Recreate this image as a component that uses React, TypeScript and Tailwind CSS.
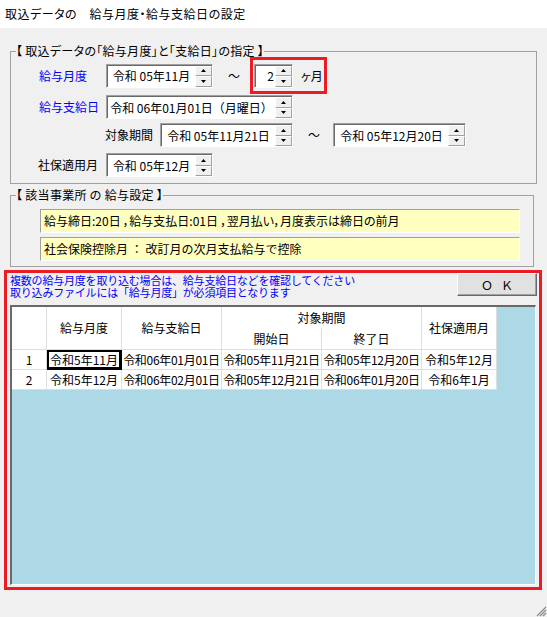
import React from "react";

const Arrow = ({ up }: { up?: boolean }) => (
  <svg width="5" height="3" viewBox="0 0 5 3" className="block">
    <path d={up ? "M0 3 L2.5 0 L5 3Z" : "M0 0 L5 0 L2.5 3Z"} fill="#000" />
  </svg>
);

function Spinner() {
  return (
    <div className="flex h-full w-[17px] shrink-0 flex-col">
      <div className="flex flex-1 items-center justify-center border border-b-[#a0a0a0] border-l-white border-r-[#a0a0a0] border-t-white bg-[#f0f0f0]">
        <Arrow up />
      </div>
      <div className="flex flex-1 items-center justify-center border border-b-[#a0a0a0] border-l-white border-r-[#a0a0a0] border-t-white bg-[#f0f0f0]">
        <Arrow />
      </div>
    </div>
  );
}

function Field({ w, text, right }: { w: string; text: string; right?: boolean }) {
  return (
    <div
      className={`flex h-[24px] shrink-0 border border-b-white border-l-[#a0a0a0] border-r-white border-t-[#a0a0a0] bg-white pl-[1px] pt-[1px] shadow-[inset_1px_1px_0_#696969] ${w}`}
    >
      <div
        className={`flex flex-1 items-center whitespace-nowrap leading-[14px] ${
          right ? "justify-end pr-[1px]" : "justify-center"
        }`}
      >
        {text}
      </div>
      <Spinner />
    </div>
  );
}

const cell = "flex items-center justify-center whitespace-nowrap border-b border-r border-[#dedede] leading-[14px]";

export default function App() {
  return (
    <div className="flex h-[617px] w-[547px] flex-col overflow-hidden bg-[#f0f0f0] font-['Noto_Sans_CJK_JP','Noto_Sans',sans-serif] text-[12px] text-black">
      <div className="h-[28px] shrink-0 bg-white pl-[5px] text-[12px] leading-[28px] tracking-[0.5px] [font-feature-settings:'palt']">
        取込データの　給与月度・給与支給日の設定
      </div>

      <fieldset className="ml-[10px] mt-[17px] w-[527px] shrink-0 border border-[#a0a0a0] pb-[6px]">
        <legend className="ml-[5px] whitespace-nowrap text-[12px] leading-[12px] tracking-[0.3px] [font-feature-settings:'palt']">
          【 取込データの「給与月度」と「支給日」の指定 】
        </legend>
        <div className="flex h-[37px] items-center pl-[28px]">
          <div className="w-[67px] leading-[14px] text-[#0000ff]">給与月度</div>
          <Field w="w-[107px]" text="令和 05年11月" />
          <div className="ml-[15px] w-[12px] leading-[14px]">～</div>
          <div className="ml-[10px] flex h-[37px] w-[77px] items-center border-[3px] border-[#ed1c24] pl-[1px]">
            <Field w="w-[39px]" text="2" right />
            <div className="ml-[8px] whitespace-nowrap leading-[14px] [font-feature-settings:'palt']">ヶ月</div>
          </div>
        </div>
        <div className="mt-[1px] flex h-[24px] items-center pl-[28px]">
          <div className="w-[67px] leading-[14px] text-[#0000ff]">給与支給日</div>
          <Field w="w-[187px]" text="令和 06年01月01日（月曜日）" />
        </div>
        <div className="mt-[4px] flex h-[24px] items-center pl-[94px]">
          <div className="w-[55px] leading-[14px]">対象期間</div>
          <Field w="w-[133px]" text="令和 05年11月21日" />
          <div className="ml-[15px] w-[12px] leading-[14px]">～</div>
          <div className="ml-[13px]">
            <Field w="w-[133px]" text="令和 05年12月20日" />
          </div>
        </div>
        <div className="mt-[6px] flex h-[24px] items-center pl-[27px]">
          <div className="w-[68px] leading-[14px]">社保適用月</div>
          <Field w="w-[107px]" text="令和 05年12月" />
        </div>
      </fieldset>

      <fieldset className="ml-[10px] mt-[5px] w-[524px] shrink-0 border border-[#a0a0a0] pb-[5px]">
        <legend className="ml-[5px] whitespace-nowrap text-[12px] leading-[12px] tracking-[0.3px] [font-feature-settings:'palt']">【 該当事業所 の 給与設定 】</legend>
        <div className="ml-[29px] mt-[8px] flex h-[24px] w-[480px] items-center whitespace-nowrap border border-b-white border-l-[#a0a0a0] border-r-white border-t-[#a0a0a0] bg-[#ffffc0] pl-[3px] leading-[14px] [font-feature-settings:'palt']">
          給与締日:20日 ，給与支払日:01日 ，翌月払い，月度表示は締日の前月
        </div>
        <div className="ml-[29px] mt-[4px] flex h-[24px] w-[480px] items-center whitespace-nowrap border border-b-white border-l-[#a0a0a0] border-r-white border-t-[#a0a0a0] bg-[#ffffc0] pl-[3px] leading-[14px]">
          社会保険控除月 ： 改訂月の次月支払給与で控除
        </div>
      </fieldset>

      <div className="ml-[4px] mt-[3px] flex h-[320px] w-[538px] shrink-0 flex-col border-[3px] border-[#ed1c24]">
        <div className="flex h-[32px] shrink-0">
          <div className="flex-1 pl-[3px] pt-[1px] text-[11px] leading-[12px] tracking-[-0.2px] text-[#0000ff]">
            <div className="h-[12px] whitespace-nowrap">複数の給与月度を取り込む場合は、給与支給日などを確認してください</div>
            <div className="h-[12px] whitespace-nowrap">取り込みファイルには「給与月度」が必須項目となります</div>
          </div>
          <div className="mr-[2px] flex h-[23px] w-[80px] items-center justify-center gap-[8px] border border-b-[#696969] border-l-white border-r-[#696969] border-t-white bg-[#e1e1e1] leading-[14px] shadow-[inset_-1px_-1px_0_#a0a0a0]">
            <span>Ｏ</span>
            <span>Ｋ</span>
          </div>
        </div>
        <div className="ml-[3px] h-[280px] w-[526px] border-b border-l-2 border-r border-t-2 border-[#696969] border-b-white border-r-white bg-[#add8e6]">
          <div className="grid w-[485px] grid-cols-[35px_75px_100px_100px_100px_75px] grid-rows-[21px_22px_20px_20px] bg-white">
            <div className={`${cell} row-span-2`}></div>
            <div className={`${cell} row-span-2`}>給与月度</div>
            <div className={`${cell} row-span-2`}>給与支給日</div>
            <div className="col-span-2 flex items-center justify-center border-r border-[#dedede] leading-[14px]">対象期間</div>
            <div className={`${cell} row-span-2`}>社保適用月</div>
            <div className={cell}>開始日</div>
            <div className={cell}>終了日</div>

            <div className={cell}>1</div>
            <div className="flex items-center justify-center whitespace-nowrap border-2 border-b-[3px] border-r-[3px] border-black leading-[14px]">令和5年11月</div>
            <div className={`${cell} tracking-[-0.3px]`}>令和06年01月01日</div>
            <div className={`${cell} tracking-[-0.3px]`}>令和05年11月21日</div>
            <div className={`${cell} tracking-[-0.3px]`}>令和05年12月20日</div>
            <div className={cell}>令和5年12月</div>

            <div className={cell}>2</div>
            <div className={cell}>令和5年12月</div>
            <div className={`${cell} tracking-[-0.3px]`}>令和06年02月01日</div>
            <div className={`${cell} tracking-[-0.3px]`}>令和05年12月21日</div>
            <div className={`${cell} tracking-[-0.3px]`}>令和06年01月20日</div>
            <div className={cell}>令和6年1月</div>
          </div>
        </div>
      </div>

      <div className="flex flex-1 items-end justify-end">
        <svg width="11" height="11" viewBox="0 0 11 11" className="block">
          <path d="M10 1 L1 10 M10 4 L4 10 M10 7 L7 10" stroke="#8a8a8a" strokeWidth="1.2" />
        </svg>
      </div>
    </div>
  );
}
